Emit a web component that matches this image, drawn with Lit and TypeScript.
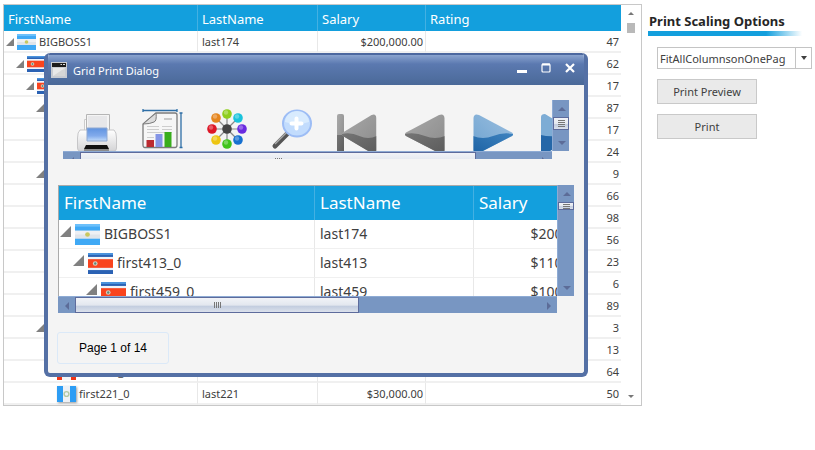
import { LitElement, html, svg, css, nothing } from "lit";
import { customElement, property } from "lit/decorators.js";

type Flag = "ar" | "cr" | "gt" | "ca";
interface Row {
  level: number;
  open?: boolean;
  flag?: Flag;
  first?: string;
  last?: string;
  salary?: string;
  rating?: number;
}

const ROWS: Row[] = [
  { level: 0, open: true, flag: "ar", first: "BIGBOSS1", last: "last174", salary: "$200,000.00", rating: 47 },
  { level: 1, open: true, flag: "cr", first: "first413_0", last: "last413", salary: "$110,000.00", rating: 62 },
  { level: 2, open: true, flag: "cr", first: "first459_0", last: "last459", salary: "$100,000.00", rating: 17 },
  { level: 3, open: true, rating: 87 },
  { level: 4, rating: 17 },
  { level: 4, rating: 24 },
  { level: 3, open: true, rating: 9 },
  { level: 4, rating: 66 },
  { level: 4, rating: 98 },
  { level: 4, rating: 56 },
  { level: 4, rating: 23 },
  { level: 4, rating: 6 },
  { level: 4, rating: 89 },
  { level: 3, open: true, rating: 3 },
  { level: 4, rating: 13 },
  { level: 4, flag: "ca", first: "first220_0", rating: 64 },
  { level: 4, flag: "gt", first: "first221_0", last: "last221", salary: "$30,000.00", rating: 50 },
];

const expander = html`<svg class="exp" viewBox="0 0 8 8"><path d="M8 0V8H0Z" fill="#808080" /></svg>`;

function flagIcon(kind?: Flag) {
  if (!kind) return nothing;
  const art = {
    ar: svg`<rect width="19" height="16" fill="#3fa9f5"/><rect width="19" height="2" fill="#6cc0fb"/><rect y="5" width="19" height="6" fill="#eef0f4"/><rect y="8" width="19" height="3" fill="#dfe4ea"/><circle cx="9.5" cy="8" r="1.8" fill="#c8c860"/>`,
    cr: svg`<rect width="19" height="16" fill="#2b62b4"/><rect width="19" height="1.5" fill="#4b93dd"/><rect y="3" width="19" height="10" fill="#eef3fa"/><rect y="4.7" width="19" height="6.6" fill="#f9441e"/><circle cx="5.5" cy="8" r="1.8" fill="#d8cfc0"/><circle cx="5.5" cy="8" r="0.9" fill="#5d8a7a"/>`,
    gt: svg`<rect width="19" height="16" fill="#2d9df4"/><rect x="6" width="7" height="16" fill="#eef1f6"/><circle cx="9.5" cy="8" r="2.4" fill="none" stroke="#b2c9a4" stroke-width="1.4"/>`,
    ca: svg`<rect width="19" height="16" fill="#ef3517"/><rect x="5" width="9" height="16" fill="#f4f4f6"/><path d="M9.5 4l3 5-3 3-3-3z" fill="#ee5a42"/>`,
  }[kind];
  return html`<svg class="flag ${kind}" viewBox="0 0 19 16" preserveAspectRatio="none">${art}</svg>`;
}

const HUB = [
  ["#8fce1c", 20, 5], ["#19c3dc", 31, 9], ["#6a2be0", 35, 20], ["#1670d0", 31, 31],
  ["#3fc41b", 20, 35], ["#edc512", 9, 31], ["#dd1626", 5, 20], ["#e5851d", 9, 9],
] as const;

type Tones = [[string, string], [string, string]];
function navIcon(id: string, dir: number, bar: boolean, hi: [string, string], lo: [string, string]) {
  return html`<svg viewBox="0 0 40 40">
    <defs>
      <linearGradient id="${id}h" x2="1" y2="1"><stop stop-color=${hi[0]} /><stop offset="1" stop-color=${hi[1]} /></linearGradient>
      <linearGradient id="${id}l" x2="1" y2="1"><stop stop-color=${lo[0]} /><stop offset="1" stop-color=${lo[1]} /></linearGradient>
      <clipPath id="${id}c"><path d="M1 18.500L34 1Q39 -1 39.500 4V36Q39 41 34 39L1 22Q-1 20 1 18.500Z" /></clipPath>
    </defs>
    <g transform=${dir > 0 ? "translate(40 0) scale(-1 1)" : "translate(0 0)"}>
      ${bar ? svg`<rect width="7" height="40" rx="2" fill="url(#${id}h)"/><rect y="21" width="7" height="19" fill="url(#${id}l)"/>` : nothing}
      <g clip-path="url(#${id}c)" transform=${bar ? "translate(5 0) scale(.87 1)" : "translate(0 0)"}>
        <rect width="40" height="40" fill="url(#${id}h)" />
        <path d="M0 20Q10 18 20 22T40 22V40H0Z" fill="url(#${id}l)" />
      </g>
    </g>
  </svg>`;
}
const GREY: Tones = [["#a9a9a9", "#8a8a8a"], ["#757575", "#5b5b5b"]];
const BLUE: Tones = [["#9cbfdf", "#6da2d0"], ["#3f83bf", "#1c62a4"]];

const lastIcon = html`<svg viewBox="0 0 40 40">
  <path d="M0 3Q0 0 4 0L34 18V0H40V40H34V22L4 40H0Z" fill="#7dacd5" />
  <path d="M0 21Q10 24 34 20H40V40H34V22L4 40H0Z" fill="#2567a8" />
</svg>`;

const printerIcon = html`<svg viewBox="0 0 40 40">
  <defs>
    <linearGradient id="pa" x2="0" y2="1"><stop stop-color="#fff" /><stop offset="1" stop-color="#d4d4d6" /></linearGradient>
    <linearGradient id="pb" x2="0" y2="1"><stop stop-color="#5f93e0" /><stop offset=".6" stop-color="#82abec" /><stop offset="1" stop-color="#c3dcfa" /></linearGradient>
  </defs>
  <path d="M7.500 5.500H12V20H7.500Z" fill="#fafafa" stroke="#ccc" />
  <path d="M9.500 .5H32.500V18H9.500Z" fill="#f4f4f4" stroke="#b5b5b5" />
  <path d="M11 2H30V15H11Z" fill="#e7e7e9" />
  <path d="M3 16H37Q39.500 18 39.500 24V34Q39.500 37 37 37H3Q.5 37 .5 34V24Q.5 18 3 16Z" fill="url(#pa)" stroke="#c6c6c8" />
  <path d="M10 14H30V27H10Z" fill="url(#pb)" stroke="#8fa9d2" />
  <path d="M9 31H30L32 35H7Z" fill="#111" /><path d="M7 35H32V37H7Z" fill="#8c8c8c" />
</svg>`;

const reportIcon = html`<svg viewBox="0 0 40 40">
  <path d="M1 1.500H35M1 0V3M35 0V3M39 4V38M37.500 4H40.500M37.500 38.500H40.500" stroke="#2d6ea6" stroke-width="1.300" />
  <path d="M14 4H33Q35 4 35 6V36Q35 38.500 33 38.500H3Q1 38.500 1 36V15Z" fill="#f6f6f6" stroke="#7c7c7c" stroke-width="1.300" />
  <path d="M14 4Q15 12 12 13Q8 15 1 15Z" fill="#dcdcdc" stroke="#7c7c7c" />
  <path d="M22 9H30V11H22Z" fill="#c9c9c9" />
  <path d="M5 17.500H17M5 20.500H17M20 17.500H30M20 20.500H30M5 23.500H30M5 28.500H12" fill="none" stroke="#cdcdcd" />
  <path d="M4.500 31H12V38H4.500Z" fill="#bb2a30" /><path d="M13.500 25H20.500V38H13.500Z" fill="#8495e6" /><path d="M22.500 23H29.500V38H22.500Z" fill="#39ad1c" />
</svg>`;

const hubIcon = html`<svg viewBox="0 0 40 40">
  ${HUB.map(([, x, y]) => svg`<path d="M20 20L${x} ${y}" stroke="#888" stroke-width="1.200"/>`)}
  <circle cx="20" cy="20" r="4.800" fill="#444" />
  ${HUB.map(([c, x, y]) => svg`<circle cx=${x} cy=${y} r="4.800" fill=${c}/><circle cx=${x - 1} cy=${y - 1.5} r="2.200" fill="#fff" opacity=".3"/>`)}
</svg>`;

const zoomIcon = html`<svg viewBox="0 0 40 40">
  <path d="M3 37L15 25" stroke="#555" stroke-width="5" stroke-linecap="round" />
  <path d="M3 35L14 24" stroke="#aaa" stroke-width="1.500" />
  <ellipse cx="25" cy="14.500" rx="14" ry="13" fill="#c2dcfd" stroke="#9dbdf5" stroke-width="2" />
  <path d="M13 13A12 11 0 0 1 37 13Q25 17 13 13Z" fill="#d8ebfe" />
  <path d="M24.500 9.500V19.500M19.500 14.500H29.500" stroke="#fff" stroke-width="4" stroke-linecap="round" />
</svg>`;

@customElement("tree-table")
export class TreeTable extends LitElement {
  @property({ attribute: false }) rows: Row[] = [];
  @property({ type: Boolean, reflect: true }) preview = false;

  static styles = css`
    :host { display: block; min-width: 0; --row: 22px; --head: 26px; --size: 11px; --headsize: 13px; --step: 10px; --pad: 4px;
      --c1: 193px; --c2: 120px; --c3: 108px; --line: 2px; --drop: 2px; }
    :host([preview]) { --row: 29px; --head: 34px; --size: 14px; --headsize: 17px; --step: 13px; --pad: 5px;
      --c1: 255px; --c2: 159px; --c3: 142px; --line: 1px; --drop: 0px; }
    table { width: 100%; table-layout: fixed; border-collapse: separate; border-spacing: 0; background: #fff; color: #404040; }
    .c1 { width: var(--c1); } .c2 { width: var(--c2); } .c3 { width: var(--c3); }
    th { height: var(--head); padding: var(--drop) var(--pad) 0; text-align: left; font-weight: 400; font-size: var(--headsize);
      color: #fff; background: #139fdd; box-sizing: border-box; line-height: 20px; }
    th + th { border-left: 1px solid #44b0e2; }
    td { height: var(--row); box-sizing: border-box; padding: var(--drop) var(--pad) 0; font-size: var(--size); line-height: 16px; white-space: nowrap;
      border-bottom: var(--line) solid #f0f0f0; }
    td + td { border-left: 1px solid #e8e8e8; }
    .num { text-align: right; padding-left: 2px; padding-right: 2px; }
    :host([preview]) .num { padding-right: 5px; }
    .node { display: flex; align-items: center; padding-left: calc(var(--level) * var(--step)); margin-left: -2px; }
    :host([preview]) .node { margin-left: -4px; }
    .slot { width: 10px; flex: none; display: flex; margin-right: 1px; }
    .exp { width: 8px; height: 8px; }
    .flag { width: 19px; height: 16px; margin-right: 3px; }
    .gt { filter: drop-shadow(1px 1px 1px #999); }
    :host([preview]) .slot { width: 14px; }
    :host([preview]) .exp { width: 11px; height: 11px; margin-bottom: 6px; }
    :host([preview]) .flag { width: 25px; height: 21px; margin-right: 4px; }
  `;

  render() {
    return html`<table>
      <colgroup><col class="c1" /><col class="c2" /><col class="c3" />${this.preview ? nothing : html`<col />`}</colgroup>
      <thead><tr><th>FirstName</th><th>LastName</th><th>Salary</th>${this.preview ? nothing : html`<th>Rating</th>`}</tr></thead>
      <tbody>
        ${this.rows.map((r) => html`<tr>
          <td><div class="node" style="--level:${r.level}"><span class="slot">${r.open ? expander : nothing}</span>${flagIcon(r.flag)}<span>${r.first}</span></div></td>
          <td>${r.last}</td>
          <td class="num">${r.salary}</td>
          ${this.preview ? nothing : html`<td class="num">${r.rating}</td>`}
        </tr>`)}
      </tbody>
    </table>`;
  }
}

@customElement("print-dialog")
export class PrintDialog extends LitElement {
  static styles = css`
    :host { display: block; box-sizing: border-box; border: 4px solid #5470a5; border-top: 0; border-radius: 6px; background: #f4f4f4; overflow: hidden; }
    header { height: 32px; margin: 0 -4px; padding: 0 10px 0 7px; display: flex; align-items: center; box-sizing: border-box;
      border-top: 2px solid #4d689f; background: linear-gradient(#8ba4cf, #5b79b0 30%, #4a6998); color: #fff; }
    header svg { display: block; }
    .app { width: 16px; height: 16px; margin-right: 6px; }
    h1 { flex: 1; margin: 0; padding-top: 2px; font-size: 11px; font-weight: 400; line-height: 16px; }
    button { border: 0; background: none; padding: 0; display: block; }
    .win { width: 16px; height: 16px; margin: 0 0 4px 8px; }
    .win svg { width: 16px; height: 16px; }
    .content { padding: 15px 10px 9px; }
    .scroller { display: grid; grid-template-columns: minmax(0, 1fr) 17px; }
    .tools { margin: 0 5px 26px; grid-template-rows: 51px 8px; }
    .view { overflow: hidden; }
    .icons { display: flex; gap: 25px; padding: 9px 0 0 14px; }
    .nav { display: flex; gap: 28px; padding-top: 5px; }
    .icons button, .icons svg { display: block; flex: none; width: 40px; height: 40px; overflow: visible; }
    .printer { margin-top: 5px; }
    .bar { display: flex; background: #7896c2; box-sizing: border-box; overflow: hidden; }
    .bar.h { border-top: 1px solid #8eabd4; }
    .bar.v { flex-direction: column; border-left: 1px solid #8eabd4; }
    .arrow { flex: none; display: grid; place-items: center; width: 17px; height: 17px; }
    .arrow svg { width: 10px; height: 10px; fill: #5c6c98; }
    .gap { flex: 1; }
    .thumb { box-sizing: border-box; border: 1px solid #5d6b9c; display: flex; align-items: center; justify-content: center; gap: 1px;
      background: linear-gradient(#f1f3f7, #e3e7ef 50%, #c3cddf 60%, #dbe1ec); }
    .thumb i { width: 1px; height: 6px; background: #777; }
    .v .thumb { flex-direction: column; }
    .v .thumb i { width: 7px; height: 1px; }
    .tools .v .thumb { height: 13px; }
    .doc .v .thumb { height: 8px; }
    .tools .h .thumb { width: 81%; height: 17px; flex: none; }
    .doc .h .thumb { width: 57%; }
    .doc { grid-template-rows: 111px 17px; margin: 0 0 19px; }
    .doc .view { box-sizing: border-box; border: solid #aaa; border-width: 1px 0 0 1px; }
    .doc tree-table { width: 556px; }
    .page { display: grid; place-items: center; box-sizing: border-box; width: 112px; height: 32px; margin-left: -1px; border: 1px solid #dbe9f8; border-radius: 3px;
      color: #000; font: 12px/16px "Liberation Sans", Arial, sans-serif; }
  `;

  private arrow(d: string) {
    return html`<span class="arrow"><svg viewBox="0 0 10 10"><path d=${d} /></svg></span>`;
  }
  private grip(n: number) {
    return html`<span class="thumb">${Array.from({ length: n }, () => html`<i></i>`)}</span>`;
  }
  private vbar(n: number) {
    return html`<div class="bar v">${this.arrow("M1 7L5 3L9 7Z")}${this.grip(n)}<span class="gap"></span>${this.arrow("M1 3L5 7L9 3Z")}</div>`;
  }
  private hbar() {
    return html`<div class="bar h">${this.arrow("M7 1V9L3 5Z")}${this.grip(4)}<span class="gap"></span>${this.arrow("M3 1V9L7 5Z")}</div>`;
  }

  render() {
    return html`
      <header>
        <svg class="app" viewBox="0 0 16 16"><rect width="16" height="16" fill="#c9ccd2" /><rect x="1" y="1" width="14" height="4" fill="#1c1c1c" /><path d="M9.500 2.500H11M12 2.500H14" stroke="#ddd" /><path d="M2 6H14V14H2Z" fill="#e9e9e9" /><path d="M2 14L14 6V14Z" fill="#d6d6d6" /></svg>
        <h1>Grid Print Dialog</h1>
        <button class="win" aria-label="Minimize"><svg viewBox="0 0 16 16"><path d="M3 11.500H13" stroke="#fff" stroke-width="3" /></svg></button>
        <button class="win" aria-label="Maximize"><svg viewBox="0 0 16 16"><rect x="4" y="4" width="8" height="8" rx="1" fill="none" stroke="#fff" stroke-width="1.200" /><path d="M4 4.500H12" stroke="#fff" stroke-width="2" /></svg></button>
        <button class="win" aria-label="Close"><svg viewBox="0 0 16 16"><path d="M4 4L12 12M12 4L4 12" stroke="#fff" stroke-width="2.200" /></svg></button>
      </header>
      <div class="content">
        <div class="scroller tools">
          <div class="view"><div class="icons">
            <button class="printer" aria-label="Print">${printerIcon}</button>
            <button aria-label="Page setup">${reportIcon}</button>
            <button aria-label="Options">${hubIcon}</button>
            <button aria-label="Zoom in">${zoomIcon}</button>
            <div class="nav">
              <button aria-label="First page">${navIcon("f", -1, true, ...GREY)}</button>
              <button aria-label="Previous page">${navIcon("p", -1, false, ...GREY)}</button>
              <button aria-label="Next page">${navIcon("n", 1, false, ...BLUE)}</button>
              <button aria-label="Last page">${lastIcon}</button>
            </div>
          </div></div>
          ${this.vbar(4)}${this.hbar()}
        </div>
        <div class="scroller doc">
          <div class="view"><tree-table preview .rows=${ROWS.slice(0, 3)}></tree-table></div>
          ${this.vbar(3)}${this.hbar()}
        </div>
        <output class="page">Page 1 of 14</output>
      </div>`;
  }
}

@customElement("app-root")
export class AppRoot extends LitElement {
  static styles = css`
    :host { display: block; min-height: 100vh; box-sizing: border-box; padding: 4px 3px 0; background: #fff; color: #404040;
      font-family: "Noto Sans", "Open Sans", sans-serif; }
    .page { position: relative; display: flex; align-items: flex-start; gap: 6px; }
    .grid { flex: 1; min-width: 0; box-sizing: border-box; display: flex; border: 1px solid #c8c8c8; }
    .grid tree-table { flex: 1; }
    .rail { width: 20px; flex: none; display: flex; flex-direction: column; align-items: center; padding: 7px 0; box-sizing: border-box; }
    .rail svg { width: 6px; height: 3px; fill: #777; }
    .rail span { width: 8px; height: 10px; margin-top: 8px; background: #b9b9b9; }
    .rail .down { margin-top: auto; }
    aside { width: 164px; flex: none; }
    h2 { margin: 6px 0 0; padding: 1px 0 0 1px; font-size: 13px; line-height: 20px; color: #262626; white-space: nowrap; }
    .rule { height: 5px; margin-bottom: 11px; background: linear-gradient(90deg, #139fdd 72%, #fff 94%); }
    .form { display: flex; flex-direction: column; gap: 10px; padding-left: 9px; align-items: flex-start; }
    .pick { position: relative; display: block; width: 100%; }
    select { appearance: none; display: block; width: 100%; height: 22px; box-sizing: border-box; border: 1px solid #c4c4c4; border-radius: 0; background: #fff;
      padding: 0 17px 0 2px; font: inherit; font-size: 11px; color: #404040; }
    .pick i { position: absolute; right: 0; top: 0; width: 17px; height: 22px; box-sizing: border-box; border: 1px solid #c4c4c4; display: grid; place-items: center; pointer-events: none; }
    .pick svg { width: 6px; height: 4px; fill: #404040; }
    .form button { width: 100px; height: 25px; border: 1px solid #c9c9c9; background: #eaeaea; font: inherit; font-size: 11px; color: #404040; padding: 0; }
    print-dialog { position: absolute; left: 41px; top: 49px; width: 544px; }
  `;

  render() {
    return html`<main class="page">
      <div class="grid">
        <tree-table .rows=${ROWS}></tree-table>
        <div class="rail"><svg viewBox="0 0 6 3"><path d="M0 3L3 0L6 3Z" /></svg><span></span><svg class="down" viewBox="0 0 6 3"><path d="M0 0L3 3L6 0Z" /></svg></div>
      </div>
      <aside>
        <h2>Print Scaling Options</h2>
        <div class="rule"></div>
        <div class="form">
          <label class="pick"><select aria-label="Print scaling"><option>FitAllColumnsonOnePag</option></select><i><svg viewBox="0 0 6 4"><path d="M0 0H6L3 4Z" /></svg></i></label>
          <button>Print Preview</button>
          <button>Print</button>
        </div>
      </aside>
      <print-dialog role="dialog" aria-label="Grid Print Dialog"></print-dialog>
    </main>`;
  }
}
